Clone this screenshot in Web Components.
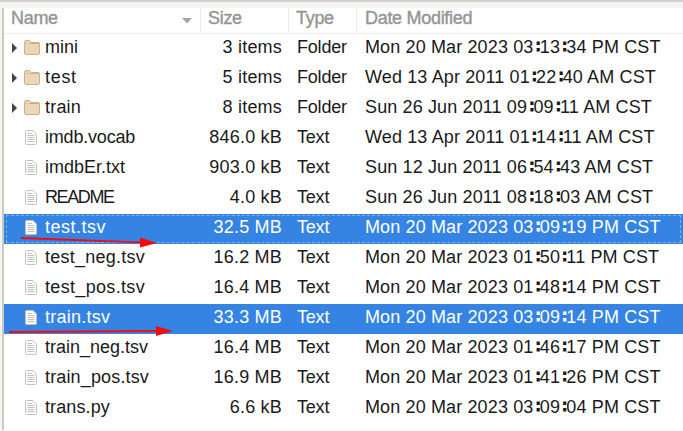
<!DOCTYPE html>
<html>
<head>
<meta charset="utf-8">
<style>
  html, body { margin: 0; padding: 0; background: #fff; }
  body { font-family: "Liberation Sans", "DejaVu Sans", sans-serif; font-size: 18px; width: 683px; height: 431px; overflow: hidden; }
</style>
</head>
<body>
<file-list>
  <file-row kind="folder" expander name="mini" size="3 items" type="Folder" date="Mon 20 Mar 2023 03∶13∶34 PM CST"></file-row>
  <file-row kind="folder" expander style="--name-track:.7px" name="test" size="5 items" type="Folder" date="Wed 13 Apr 2011 01∶22∶40 AM CST"></file-row>
  <file-row kind="folder" expander style="--name-track:.2px" name="train" size="8 items" type="Folder" date="Sun 26 Jun 2011 09∶09∶11 AM CST"></file-row>
  <file-row kind="file" style="--name-track:-.2px" name="imdb.vocab" size="846.0 kB" type="Text" date="Wed 13 Apr 2011 01∶14∶11 AM CST"></file-row>
  <file-row kind="file" name="imdbEr.txt" size="903.0 kB" type="Text" date="Sun 12 Jun 2011 06∶54∶43 AM CST"></file-row>
  <file-row kind="file" style="--name-track:-1.4px" name="README" size="4.0 kB" type="Text" date="Sun 26 Jun 2011 08∶18∶03 AM CST"></file-row>
  <file-row kind="file" selected focused style="--name-track:.5px" name="test.tsv" size="32.5 MB" type="Text" date="Mon 20 Mar 2023 03∶09∶19 PM CST"></file-row>
  <file-row kind="file" style="--name-track:.25px" name="test_neg.tsv" size="16.2 MB" type="Text" date="Mon 20 Mar 2023 01∶50∶11 PM CST"></file-row>
  <file-row kind="file" style="--name-track:.33px" name="test_pos.tsv" size="16.4 MB" type="Text" date="Mon 20 Mar 2023 01∶48∶14 PM CST"></file-row>
  <file-row kind="file" selected style="--name-track:.25px" name="train.tsv" size="33.3 MB" type="Text" date="Mon 20 Mar 2023 03∶09∶14 PM CST"></file-row>
  <file-row kind="file" name="train_neg.tsv" size="16.4 MB" type="Text" date="Mon 20 Mar 2023 01∶46∶17 PM CST"></file-row>
  <file-row kind="file" style="--name-track:.15px" name="train_pos.tsv" size="16.9 MB" type="Text" date="Mon 20 Mar 2023 01∶41∶26 PM CST"></file-row>
  <file-row kind="file" style="--name-track:.12px" name="trans.py" size="6.6 kB" type="Text" date="Mon 20 Mar 2023 03∶09∶04 PM CST"></file-row>
  <red-arrow slot="overlay" x1="21" y1="238" x2="157" y2="243"></red-arrow>
  <red-arrow slot="overlay" x1="9" y1="332" x2="173" y2="331"></red-arrow>
</file-list>

<script>
const folderIcon = `<svg width="16" height="15" viewBox="0 0 16 15">
  <path d="M.5 2.5Q.5 .5 2 .5H5.5L7.5 2.5H14.5Q15.5 2.5 15.5 3.5V13Q15.5 14.5 14 14.5H2Q.5 14.5 .5 13Z" fill="#ead7b8" stroke="#c9b189"/>
  <path d="M1 3.5H5.5L7 2.5H15V4H1Z" fill="#c9b189"/>
</svg>`;

const fileIcon = `<svg width="12" height="15" viewBox="0 0 12 15">
  <path d="M.5 1.5Q.5 .5 1.5 .5H8L11.5 4V13.5Q11.5 14.5 10.5 14.5H1.5Q.5 14.5 .5 13.5Z" fill="#fbfbfa" stroke="#c4c2bd"/>
  <path d="M2.5 3.5H7M2.5 5.5H9.5M2.5 7.5H9.5M2.5 9.5H9.5M2.5 11.5H9.5" stroke="#c4c2bd" fill="none"/>
</svg>`;

class FileRow extends HTMLElement {
  connectedCallback() {
    const root = this.attachShadow({ mode: 'open' });
    const attr = (n) => this.getAttribute(n);
    const icon = attr('kind') === 'folder' ? folderIcon : fileIcon;
    // the ratio sign sits tight against the next digit, as nautilus draws it
    const date = attr('date').replace(/∶/g, '<span class="colon">∶</span>');
    root.innerHTML = `
      <style>
        :host {
          display: grid;
          grid-template-columns: 197px 88px 68px 1fr;
          height: 30px;
          align-items: center;
          position: relative;
          color: #1a1a1a;
          box-sizing: border-box;
        }
        :host([selected]) { background: #3584e4; color: #fff; }
        :host([focused])::after {
          content: "";
          position: absolute;
          inset: 1px 2px;
          border: 1px dashed rgba(255, 255, 255, .35);
          pointer-events: none;
        }
        .cell { margin-top: -4px; white-space: nowrap; }
        .name { display: flex; align-items: center; padding-left: 7px; }
        .label { letter-spacing: var(--name-track, 0); }
        .arrow { width: 13px; height: 15px; display: flex; align-items: center; margin-top: 1px; }
        .arrow i { display: block; border-left: 5px solid #444; border-top: 5px solid transparent; border-bottom: 5px solid transparent; margin-left: 1px; }
        .icon { width: 21px; height: 15px; display: flex; margin-top: 1px; }
        :host([kind="file"]) .icon { padding-left: 1px; width: 20px; }
        .size { text-align: right; padding-right: 7px; letter-spacing: .2px; }
        .type { padding-left: 8px; letter-spacing: -.2px; }
        .date { padding-left: 8px; letter-spacing: .13px; }
        .colon { font-family: "DejaVu Sans", sans-serif; font-weight: bold; margin-left: 2px; letter-spacing: -1px; }
      </style>
      <div class="cell name">
        <span class="arrow">${this.hasAttribute('expander') ? '<i></i>' : ''}</span>
        <span class="icon">${icon}</span>
        <span class="label">${attr('name')}</span>
      </div>
      <div class="cell size">${attr('size')}</div>
      <div class="cell type">${attr('type')}</div>
      <div class="cell date">${date}</div>`;
  }
}

class ColumnHead extends HTMLElement {
  constructor() {
    super();
    this.attachShadow({ mode: 'open' }).innerHTML = `
      <style>
        :host {
          display: flex;
          align-items: center;
          justify-content: space-between;
          padding: 0 7px 5px;
          color: #959595;
          border-right: 1px solid #ececea;
          box-sizing: border-box;
          letter-spacing: -.3px;
          -webkit-text-stroke: .4px #959595;
        }
        :host(:last-child) { border-right: 0; padding-left: 8px; }
        ::slotted(svg) { margin-top: 5px; }
      </style>
      <slot></slot>`;
  }
}

class RedArrow extends HTMLElement {
  connectedCallback() {
    const x1 = +this.getAttribute('x1'), y1 = +this.getAttribute('y1');
    const x2 = +this.getAttribute('x2'), y2 = +this.getAttribute('y2');
    const bx = x2 - 17, by = y2 + (y1 - y2) * 17 / (x2 - x1);
    this.attachShadow({ mode: 'open' }).innerHTML = `
      <style>
        :host { position: absolute; inset: 0; display: block; pointer-events: none; }
        svg { position: absolute; left: 0; top: 0; }
      </style>
      <svg width="683" height="431">
        <path d="M${x1} ${y1}L${bx} ${by}" stroke="#f80a0a" stroke-width="2" fill="none"/>
        <path d="M${x2} ${y2}L${bx} ${by - 5}V${by + 5}Z" fill="#f80a0a"/>
      </svg>`;
  }
}

class FileList extends HTMLElement {
  constructor() {
    super();
    this.attachShadow({ mode: 'open' }).innerHTML = `
      <style>
        :host {
          display: block;
          position: relative;
          width: 683px;
          height: 431px;
          background: #f6f5f4;
          padding-top: 7px;
          box-sizing: border-box;
          border-top: 2px solid #d6d2cb;
          overflow: hidden;
        }
        .frame { border-left: 2px solid #cdc8c1; margin-left: 2px; height: 100%; background: #fff; margin-top: -1px; }
        .head {
          display: grid;
          grid-template-columns: 197px 88px 68px 1fr;
          height: 25px;
          border-bottom: 1px solid #ececea;
          box-sizing: content-box;
        }
        .over { position: absolute; left: 0; top: -2px; right: 0; bottom: 0; }
      </style>
      <div class="frame">
        <div class="head">
          <column-head>Name
            <svg width="12" height="6" viewBox="0 0 12 6"><path d="M1 0H11L6 5.5Z" fill="#a6a6a6"/></svg>
          </column-head>
          <column-head>Size</column-head>
          <column-head>Type</column-head>
          <column-head>Date Modified</column-head>
        </div>
        <slot></slot>
      </div>
      <div class="over"><slot name="overlay"></slot></div>`;
  }
}

customElements.define('file-row', FileRow);
customElements.define('column-head', ColumnHead);
customElements.define('red-arrow', RedArrow);
customElements.define('file-list', FileList);
</script>
</body>
</html>
